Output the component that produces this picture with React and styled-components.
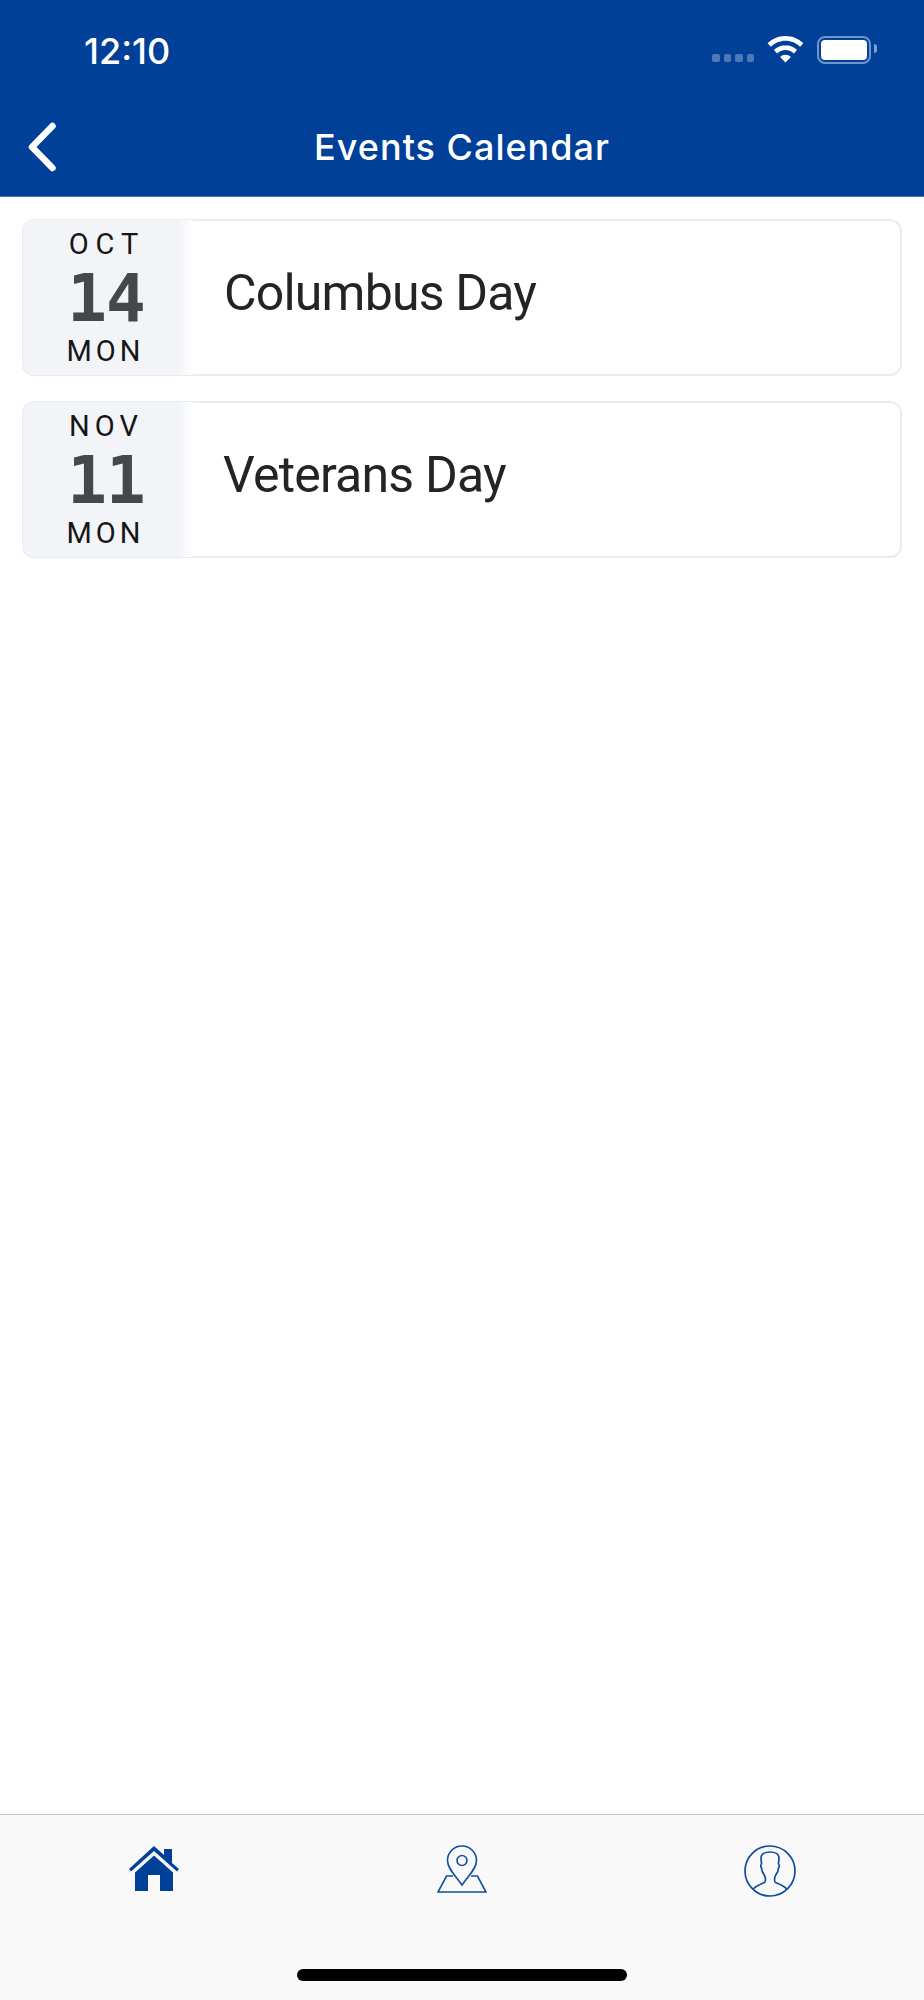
import React from "react";
import styled, { createGlobalStyle } from "styled-components";

const Global = createGlobalStyle`
  html, body { margin: 0; padding: 0; background: #fff; }
  * { box-sizing: border-box; }
`;

const Page = styled.div`
  width: 924px;
  height: 2000px;
  display: flex;
  flex-direction: column;
  background: #fff;
  font-family: Roboto, "Noto Sans", sans-serif;
  overflow: hidden;
`;

const Header = styled.header`
  height: 197px;
  flex: none;
  background: #004098;
  border-bottom: 1px solid #4c79b6;
  display: flex;
  flex-direction: column;
  color: #fff;
`;

const StatusBar = styled.div`
  height: 101px;
  flex: none;
  padding: 31px 53px 0 84px;
  display: flex;
  justify-content: space-between;
  align-items: flex-start;
`;

const Time = styled.span`
  font-family: Inter, sans-serif;
  font-size: 36px;
  font-weight: 500;
  line-height: 40px;
`;

const StatusIcons = styled.div`
  display: flex;
  align-items: flex-start;
  margin-top: 5px;
`;

const Dots = styled.div`
  display: flex;
  gap: 4px;
  margin: 18px 13px 0 0;
`;

const Dot = styled.i`
  display: block;
  width: 7.5px;
  height: 7.5px;
  border-radius: 2px;
  background: #4c79b6;
`;

const Battery = styled.div`
  width: 54px;
  height: 28px;
  margin-left: 13px;
  border: 2.5px solid #6f94c6;
  border-radius: 8px;
  padding: 2px;
  position: relative;
  &::after {
    content: "";
    position: absolute;
    right: -8px;
    top: 6px;
    width: 3px;
    height: 9px;
    background: #7f9fcc;
    border-radius: 0 3px 3px 0;
  }
`;

const BatteryFill = styled.div`
  width: 100%;
  height: 100%;
  background: #fff;
  border-radius: 4px;
`;

const NavBar = styled.div`
  height: 95px;
  padding: 0 26px 22px;
  display: grid;
  grid-template-columns: 60px 1fr 60px;
  align-items: center;
`;

const BackButton = styled.div`
  margin-top: 19px;
  line-height: 0;
`;

const Title = styled.h1`
  margin: 18px 0 0;
  text-align: center;
  font-family: Inter, sans-serif;
  font-size: 36px;
  font-weight: 500;
  letter-spacing: 1px;
  line-height: 44px;
`;

const List = styled.main`
  flex: 1;
  padding: 22px 22px 0;
  display: flex;
  flex-direction: column;
  gap: 25px;
`;

const Card = styled.article`
  height: 157px;
  display: flex;
  align-items: stretch;
  border: 2px solid #e6edf1;
  border-radius: 12px;
  background: #fff;
`;

const DateCol = styled.div`
  width: 170px;
  flex: none;
  margin: -1px 0 -1px -1px;
  padding-right: 9px;
  border-radius: 11px 0 0 11px;
  background: linear-gradient(90deg, #f2f4f8 91%, #ffffff 100%);
  display: flex;
  flex-direction: column;
  align-items: center;
`;

const DateLabel = styled.div`
  font-size: 29px;
  line-height: 30px;
  letter-spacing: ${(p) => p.$spacing}px;
  margin-left: ${(p) => p.$spacing}px;
  margin-top: ${(p) => p.$top}px;
  color: #161616;
`;

const DayNum = styled.div`
  font-family: "DejaVu Sans Mono", monospace;
  font-weight: 700;
  font-size: 66px;
  line-height: 66px;
  margin: 7px 0 0 5px;
  letter-spacing: -1px;
  color: #46474a;
`;

const EventName = styled.div`
  flex: 1;
  padding: 0 0 9px ${(p) => p.$pad}px;
  align-self: center;
  font-size: 50px;
  font-weight: 400;
  line-height: 60px;
  letter-spacing: -0.8px;
  color: #242424;
`;

const Footer = styled.footer`
  height: 186px;
  flex: none;
  background: #f9f9f9;
  border-top: 1px solid #c9c9c9;
  display: flex;
  flex-direction: column;
`;

const Tabs = styled.nav`
  display: grid;
  grid-template-columns: repeat(3, 1fr);
  height: 154px;
  padding-top: 30px;
  justify-items: center;
  align-items: start;
`;

const Indicator = styled.div`
  width: 330px;
  height: 12px;
  border-radius: 6px;
  background: #000;
  align-self: center;
`;

const BackIcon = () => (
  <svg width="30" height="50" viewBox="0 0 30 50" fill="none">
    <path d="M26.5 4 L6 25 L26.5 46" stroke="#fff" strokeWidth="6.5" strokeLinecap="round" strokeLinejoin="round" />
  </svg>
);

const WifiIcon = () => (
  <svg width="37" height="28" viewBox="0 0 37 28" style={{ display: "block" }}>
    <path d="M18.5 0C11.5 0 5.2 2.8.6 7.3l3.3 3.4C7.6 7 12.8 4.7 18.5 4.7S29.4 7 33.1 10.7l3.3-3.4C31.8 2.8 25.5 0 18.5 0Z" fill="#fff" />
    <path d="M18.5 9.3c-4.5 0-8.6 1.8-11.6 4.7l3.3 3.4c2.1-2.1 5.1-3.4 8.3-3.4s6.2 1.3 8.3 3.4l3.3-3.4c-3-2.9-7.1-4.7-11.6-4.7Z" fill="#fff" />
    <path d="M18.5 18.7c-2.1 0-4 .8-5.4 2.2l5.4 5.6 5.4-5.6c-1.4-1.4-3.3-2.2-5.4-2.2Z" fill="#fff" />
  </svg>
);

const HomeIcon = () => (
  <svg width="52" height="48" viewBox="0 0 52 48" style={{ display: "block" }}>
    <path d="M1 24 L26 1 L36 10 V4 H44 V18 L51 24 L49 26.5 L26 6 L3 26.5 Z" fill="#004098" />
    <path d="M7 27.5 L26 10.5 L45 27.5 V46 H32 V30 H20 V46 H7 Z" fill="#004098" />
  </svg>
);

const MapIcon = () => (
  <svg width="50" height="48" viewBox="0 0 50 48" fill="none" stroke="#0f4d9f" strokeWidth="1.6" style={{ display: "block" }}>
    <path d="M25 40 C19 31 10.5 24 10.5 15.5 A14.5 14.5 0 0 1 39.5 15.5 C39.5 24 31 31 25 40 Z" />
    <circle cx="25" cy="15.5" r="5" />
    <path d="M16 31 H9.5 L1 47 H49 L40.5 31 H34" />
  </svg>
);

const ProfileIcon = () => (
  <svg width="52" height="52" viewBox="0 0 52 52" fill="none" stroke="#0f4d9f" strokeWidth="1.7" style={{ display: "block" }}>
    <circle cx="26" cy="26" r="25" />
    <path d="M9.5 44 C11 41 17 39 20.5 37.5 C22 36.8 21.5 32 20.5 30.5 C18.5 28 17.5 25 17.5 23 C16.5 21.5 16.5 20 17.5 19 L17 13 C17 9 21 7 26 7 C31 7 35 9 35 13 L34.5 19 C35.5 20 35.5 21.5 34.5 23 C34.5 25 33.5 28 31.5 30.5 C30.5 32 30 36.8 31.5 37.5 C35 39 41 41 42.5 44" />
  </svg>
);

const events = [
  { month: "OCT", monthSpacing: 7, day: "14", weekday: "MON", name: "Columbus Day", pad: 31 },
  { month: "NOV", monthSpacing: 5, day: "11", weekday: "MON", name: "Veterans Day", pad: 30 },
];

export default function App() {
  return (
    <Page>
      <Global />
      <Header>
        <StatusBar>
          <Time>12:10</Time>
          <StatusIcons>
            <Dots>
              <Dot />
              <Dot />
              <Dot />
              <Dot />
            </Dots>
            <WifiIcon />
            <Battery>
              <BatteryFill />
            </Battery>
          </StatusIcons>
        </StatusBar>
        <NavBar>
          <BackButton>
            <BackIcon />
          </BackButton>
          <Title>Events Calendar</Title>
          <span />
        </NavBar>
      </Header>
      <List>
        {events.map((e) => (
          <Card key={e.name}>
            <DateCol>
              <DateLabel $spacing={e.monthSpacing} $top={9}>{e.month}</DateLabel>
              <DayNum>{e.day}</DayNum>
              <DateLabel $spacing={4} $top={4}>{e.weekday}</DateLabel>
            </DateCol>
            <EventName $pad={e.pad}>{e.name}</EventName>
          </Card>
        ))}
      </List>
      <Footer>
        <Tabs>
          <HomeIcon />
          <MapIcon />
          <ProfileIcon />
        </Tabs>
        <Indicator />
      </Footer>
    </Page>
  );
}
